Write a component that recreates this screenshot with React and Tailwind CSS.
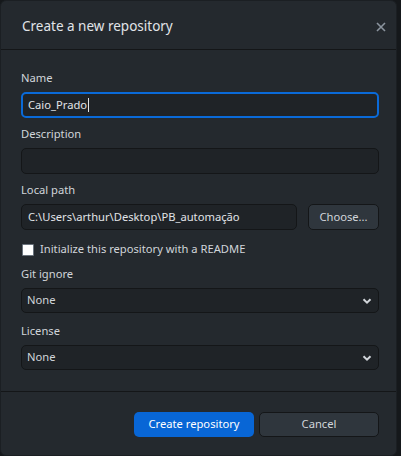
import React from "react";

function Chevron() {
  return (
    <svg width="12" height="12" viewBox="0 0 12 12" className="absolute right-[5px] top-1/2 -translate-y-1/2">
      <path d="M2.5 4.2 L6 7.7 L9.5 4.2" fill="none" stroke="#d1d5da" strokeWidth="2" />
    </svg>
  );
}

function Label({ children }) {
  return <div className="text-[11.2px] leading-[16px] text-[#d1d5da] mb-[6px]">{children}</div>;
}

export default function App() {
  return (
    <div className="w-[401px] h-[456px] bg-[#15181b] overflow-hidden" style={{ fontFamily: '"Noto Sans", "Open Sans", sans-serif' }}>
      <div className="w-[397px] h-[456px] bg-[#24292e] border border-[#1b1f23] rounded-[6px] flex flex-col">
        <div className="h-[49px] flex items-center justify-between pl-[21px] pr-[9px] pt-[3px] border-b border-[#141618] shrink-0">
          <div className="text-[13.5px] text-[#e1e4e8]">Create a new repository</div>
          <svg width="12" height="12" viewBox="0 0 12 12">
            <path d="M2 2 L10 10 M10 2 L2 10" stroke="#8b949e" strokeWidth="1.6" />
          </svg>
        </div>
        <div className="pl-[20px] pr-[17px] pt-[20px] flex flex-col h-[341px] shrink-0 text-[11.2px]">
          <Label>Name</Label>
          <div className="h-[26px] rounded-[5px] border-2 border-[#0a6ad8] bg-[#1f2327] flex items-center px-[5px] text-[#e1e4e8]">
            Caio_Prado<span className="inline-block w-px h-[14px] bg-[#e1e4e8] ml-px" />
          </div>
          <div className="h-[8px]" />
          <Label>Description</Label>
          <div className="h-[26px] rounded-[5px] border border-[#141618] bg-[#1f2327]" />
          <div className="h-[8px]" />
          <Label>Local path</Label>
          <div className="flex gap-[11px]">
            <div className="flex-1 h-[26px] rounded-[5px] border border-[#141618] bg-[#1f2327] flex items-center px-[6px] text-[#e1e4e8]">
              C:\Users\arthur\Desktop\PB_automação
            </div>
            <div className="w-[71px] h-[26px] rounded-[5px] border border-[#141618] bg-[#2f363d] flex items-center justify-center text-[#d1d5da]">
              Choose...
            </div>
          </div>
          <div className="flex items-center mt-[13px] h-[13px]">
            <div className="w-[12px] h-[12px] bg-white border border-[#6a737d] rounded-[1px] ml-[1px]" />
            <span className="ml-[6px] text-[#d1d5da]">Initialize this repository with a README</span>
          </div>
          <div className="h-[10px]" />
          <Label>Git ignore</Label>
          <div className="relative h-[25px] rounded-[5px] border border-[#141618] bg-[#1f2327] flex items-center px-[5px] text-[#d1d5da]">
            None
            <Chevron />
          </div>
          <div className="h-[10px]" />
          <Label>License</Label>
          <div className="relative h-[25px] rounded-[5px] border border-[#141618] bg-[#1f2327] flex items-center px-[5px] text-[#d1d5da]">
            None
            <Chevron />
          </div>
        </div>
        <div className="border-t border-[#141618] flex justify-end gap-[5px] pr-[17px] pt-[20px] text-[11.2px]">
          <div className="w-[120px] h-[25px] rounded-[5px] bg-[#0866d6] flex items-center justify-center text-white">
            Create repository
          </div>
          <div className="w-[120px] h-[25px] rounded-[5px] border border-[#141618] bg-[#2f363d] flex items-center justify-center text-[#d1d5da]">
            Cancel
          </div>
        </div>
      </div>
    </div>
  );
}
